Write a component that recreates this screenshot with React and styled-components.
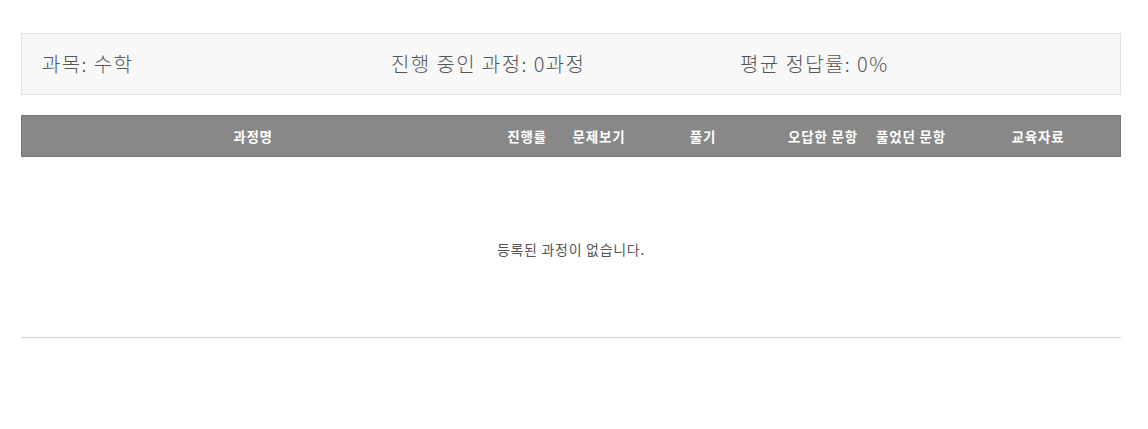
import React from "react";
import styled, { createGlobalStyle } from "styled-components";

const GlobalStyle = createGlobalStyle`
  body {
    margin: 0;
    background: #fff;
    font-family: "Noto Sans CJK KR", "Noto Sans", sans-serif;
  }
`;

const columns = [
  { title: "과정명", width: 462 },
  { title: "진행률", width: 86 },
  { title: "문제보기", width: 58 },
  { title: "풀기", width: 150 },
  { title: "오답한 문항", width: 90 },
  { title: "풀었던 문항", width: 86 },
  { title: "교육자료", width: 168 },
];

const Page = () => {
  return (
    <Wrap>
      <GlobalStyle />
      <Summary>
        <SummaryItem>과목: 수학</SummaryItem>
        <SummaryItem>진행 중인 과정: 0과정</SummaryItem>
        <SummaryItem>평균 정답률: 0%</SummaryItem>
      </Summary>

      <Table>
        <HeadRow cols={columns.map((c) => `${c.width}px`).join(" ")}>
          {columns.map((col) => (
            <HeadCell key={col.title}>{col.title}</HeadCell>
          ))}
        </HeadRow>
        <Empty>등록된 과정이 없습니다.</Empty>
      </Table>
    </Wrap>
  );
};

const Wrap = styled.div`
  width: 1100px;
  padding: 33px 0 0 21px;
`;

const Summary = styled.div`
  display: grid;
  grid-template-columns: repeat(3, 349px);
  align-items: center;
  height: 60px;
  padding: 0 20px;
  background-color: #f8f8f8;
  border: 1px solid #e0e0e0;
`;

const SummaryItem = styled.div`
  font-size: 20px;
  font-weight: 300;
  letter-spacing: 1.4px;
  color: #555;
  white-space: nowrap;
  padding-bottom: 1px;
`;

const Table = styled.div`
  margin-top: 20px;
  border-bottom: 1px solid #d0d0d0;
`;

const HeadRow = styled.div`
  display: grid;
  grid-template-columns: ${(p) => p.cols};
  align-items: center;
  background-color: #888;
  border: 1px solid #777;
  box-sizing: border-box;
  height: 42px;
`;

const HeadCell = styled.div`
  text-align: center;
  font-size: 13.5px;
  font-weight: bold;
  letter-spacing: 0.8px;
  color: #fff;
  white-space: nowrap;
`;

const Empty = styled.div`
  height: 180px;
  display: flex;
  align-items: center;
  justify-content: center;
  font-size: 14px;
  letter-spacing: 0.7px;
  color: #555;
  padding-top: 3px;
  box-sizing: border-box;
`;

export default Page;
